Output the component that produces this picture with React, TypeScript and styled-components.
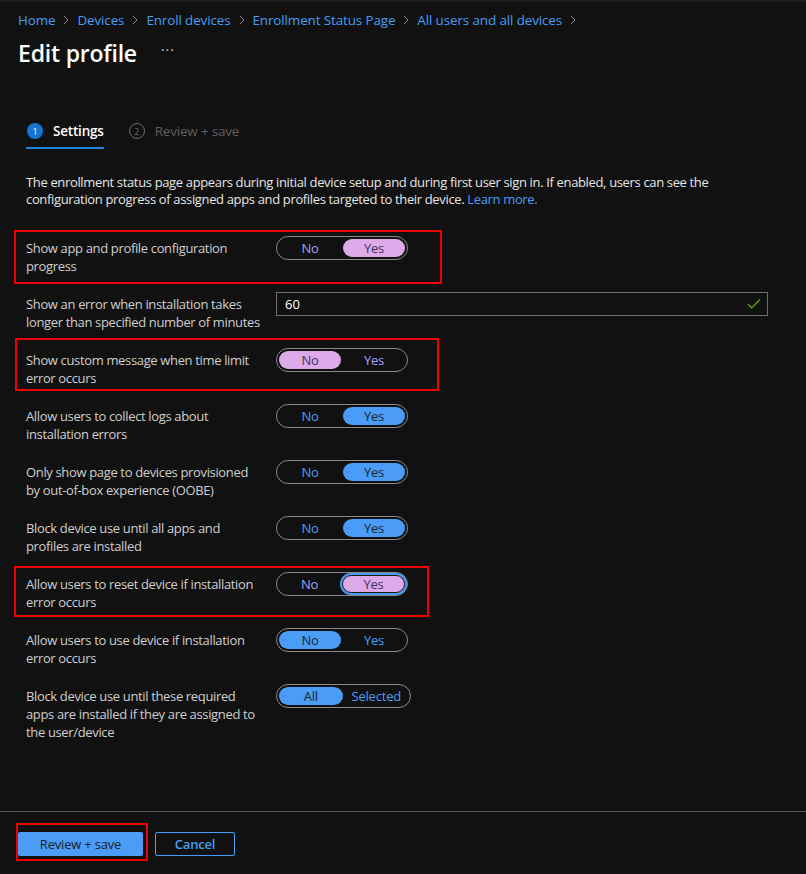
import React from "react";
import styled, { createGlobalStyle, css } from "styled-components";

const GlobalStyle = createGlobalStyle`
  html, body { margin: 0; padding: 0; background: #111111; }
  body { font-family: "Segoe UI", "Open Sans", "Noto Sans", sans-serif; -webkit-font-smoothing: antialiased; }
  * { box-sizing: border-box; }
`;

const Page = styled.div`
  width: 806px;
  height: 874px;
  background: #111111;
  border-top: 2px solid #1c1c1c;
  display: flex;
  flex-direction: column;
  overflow: hidden;
`;

const Header = styled.header`
  padding: 8px 18px 0;
`;

const Crumbs = styled.nav`
  display: flex;
  align-items: center;
  gap: 8px;
  height: 20px;
  font-size: 13.4px;
  line-height: 20px;
  letter-spacing: -0.1px;
`;

const Crumb = styled.a`
  color: #479ef5;
  text-decoration: none;
  white-space: nowrap;
`;

const TitleRow = styled.div`
  display: flex;
  align-items: center;
  margin-top: 7px;
  height: 32px;
`;

const Title = styled.h1`
  margin: 0;
  font-size: 23px;
  font-weight: 600;
  color: #ffffff;
  line-height: 32px;
  letter-spacing: -0.2px;
`;

const More = styled.span`
  margin-left: 24px;
  color: #c8c8c8;
  font-size: 14px;
  letter-spacing: 1px;
  line-height: 14px;
  padding-bottom: 6px;
`;

const Content = styled.main`
  padding: 0 26px;
`;

const Tabs = styled.div`
  display: flex;
  gap: 24px;
  margin-top: 49px;
`;

const Tab = styled.div<{ $active?: boolean }>`
  display: flex;
  align-items: center;
  gap: 10px;
  padding: 3px 0 6px 1px;
  font-size: 13.5px;
  line-height: 20px;
  letter-spacing: -0.2px;
  border-bottom: 2px solid ${(p) => (p.$active ? "#1f86e0" : "transparent")};
  color: ${(p) => (p.$active ? "#ffffff" : "#5f5f5f")};
  font-weight: ${(p) => (p.$active ? 600 : 400)};
`;

const StepNum = styled.span<{ $active?: boolean }>`
  width: 16px;
  height: 16px;
  border-radius: 50%;
  display: inline-flex;
  align-items: center;
  justify-content: center;
  font-size: 9px;
  font-weight: 400;
  line-height: 1;
  ${(p) =>
    p.$active
      ? css`
          background: #1673d1;
          color: #ffffff;
        `
      : css`
          border: 1px solid #6a6a6a;
          color: #6a6a6a;
        `}
`;

const Description = styled.p`
  margin: 25px 0 0;
  font-size: 13px;
  line-height: 17px;
  color: #e6e6e6;
  max-width: 740px;
  letter-spacing: -0.35px;
`;

const Link = styled.a`
  color: #479ef5;
  text-decoration: none;
`;

const Form = styled.div`
  margin-top: 28px;
  display: flex;
  flex-direction: column;
`;

const Row = styled.div`
  position: relative;
  display: grid;
  grid-template-columns: 250px 1fr;
  align-items: start;
  min-height: 56px;
`;

const Highlight = styled.div<{ $top: number; $left: number; $w: number; $h: number }>`
  position: absolute;
  top: ${(p) => p.$top}px;
  left: ${(p) => p.$left}px;
  width: ${(p) => p.$w}px;
  height: ${(p) => p.$h}px;
  border: 2px solid #f00000;
  pointer-events: none;
`;

const Label = styled.div`
  padding-top: 3px;
  padding-right: 14px;
  font-size: 13px;
  line-height: 18px;
  color: #cfcfcf;
  letter-spacing: -0.35px;
`;

const Track = styled.div<{ $w?: number }>`
  display: inline-flex;
  gap: 2px;
  width: ${(p) => p.$w ?? 132}px;
  height: 24px;
  padding: 2px;
  border: 1px solid #8a8a8a;
  border-radius: 12px;
`;

type Tone = "blue" | "pink";

const Segment = styled.div<{ $on: boolean; $tone: Tone; $focus?: boolean }>`
  flex: 1;
  height: 18px;
  border-radius: 9px;
  display: flex;
  align-items: center;
  justify-content: center;
  font-size: 13px;
  line-height: 18px;
  letter-spacing: -0.2px;
  ${(p) =>
    p.$on
      ? p.$tone === "pink"
        ? css`
            background: #dea9e9;
            color: #3b3563;
          `
        : css`
            background: #4a9cf7;
            color: #1c2533;
          `
      : p.$tone === "pink"
      ? css`
          color: #a7a0f8;
        `
      : css`
          color: #479ef5;
        `}
  ${(p) =>
    p.$focus &&
    css`
      border: 1px solid #1a1a1a;
      box-shadow: 0 0 0 2px #4a9cf7;
    `}
`;

const InputBox = styled.div`
  display: flex;
  align-items: center;
  justify-content: space-between;
  width: 492px;
  height: 24px;
  border: 1px solid #6e6e6e;
  padding: 0 6px 0 8px;
  color: #ffffff;
  font-size: 13px;
`;

const Footer = styled.footer`
  margin-top: auto;
  border-top: 1px solid #5c5c5c;
  padding: 20px 18px 18px;
  display: flex;
  gap: 12px;
`;

const ButtonWrap = styled.div`
  position: relative;
`;

const Primary = styled.button`
  width: 125px;
  height: 24px;
  border: none;
  border-radius: 2px;
  background: #4a9cf7;
  color: #1d1d1d;
  font-family: inherit;
  font-size: 13px;
  letter-spacing: -0.2px;
  padding: 0;
`;

const Secondary = styled.button`
  width: 80px;
  height: 24px;
  border: 1px solid #479ef5;
  border-radius: 2px;
  background: transparent;
  color: #479ef5;
  font-family: inherit;
  font-size: 13px;
  font-weight: 600;
  letter-spacing: -0.2px;
  padding: 0;
`;

const Chevron = () => (
  <svg width="6" height="10" viewBox="0 0 6 10" fill="none">
    <path d="M0.8 0.8 L5 5 L0.8 9.2" stroke="#8a8a8a" strokeWidth="1" />
  </svg>
);

const Check = () => (
  <svg width="14" height="12" viewBox="0 0 14 12" fill="none">
    <path d="M1 6.2 L4.8 9.8 L13 1.6" stroke="#5aa300" strokeWidth="1.4" />
  </svg>
);

type ToggleProps = {
  left: string;
  right: string;
  value: 0 | 1;
  tone: Tone;
  focus?: boolean;
  width?: number;
};

const Toggle = ({ left, right, value, tone, focus, width }: ToggleProps) => (
  <Track $w={width}>
    <Segment $on={value === 0} $tone={tone}>{left}</Segment>
    <Segment $on={value === 1} $tone={tone} $focus={focus && value === 1}>
      {right}
    </Segment>
  </Track>
);

type RowDef = {
  label: string;
  control: React.ReactNode;
  box?: { top: number; left: number; w: number; h: number };
};

const rows: RowDef[] = [
  {
    label: "Show app and profile configuration progress",
    control: <Toggle left="No" right="Yes" value={1} tone="pink" />,
    box: { top: -6, left: -12, w: 428, h: 54 },
  },
  {
    label: "Show an error when installation takes longer than specified number of minutes",
    control: (
      <InputBox>
        <span>60</span>
        <Check />
      </InputBox>
    ),
  },
  {
    label: "Show custom message when time limit error occurs",
    control: <Toggle left="No" right="Yes" value={0} tone="pink" />,
    box: { top: -10, left: -11, w: 424, h: 53 },
  },
  {
    label: "Allow users to collect logs about installation errors",
    control: <Toggle left="No" right="Yes" value={1} tone="blue" />,
  },
  {
    label: "Only show page to devices provisioned by out-of-box experience (OOBE)",
    control: <Toggle left="No" right="Yes" value={1} tone="blue" />,
  },
  {
    label: "Block device use until all apps and profiles are installed",
    control: <Toggle left="No" right="Yes" value={1} tone="blue" />,
  },
  {
    label: "Allow users to reset device if installation error occurs",
    control: <Toggle left="No" right="Yes" value={1} tone="pink" focus />,
    box: { top: -6, left: -12, w: 415, h: 51 },
  },
  {
    label: "Allow users to use device if installation error occurs",
    control: <Toggle left="No" right="Yes" value={0} tone="blue" />,
  },
  {
    label: "Block device use until these required apps are installed if they are assigned to the user/device",
    control: <Toggle left="All" right="Selected" value={0} tone="blue" width={135} />,
  },
];

const crumbs = ["Home", "Devices", "Enroll devices", "Enrollment Status Page", "All users and all devices"];

export default function App() {
  return (
    <>
      <GlobalStyle />
      <Page>
        <Header>
          <Crumbs>
            {crumbs.map((c) => (
              <React.Fragment key={c}>
                <Crumb href="#">{c}</Crumb>
                <Chevron />
              </React.Fragment>
            ))}
          </Crumbs>
          <TitleRow>
            <Title>Edit profile</Title>
            <More>···</More>
          </TitleRow>
        </Header>
        <Content>
          <Tabs>
            <Tab $active>
              <StepNum $active>1</StepNum>
              Settings
            </Tab>
            <Tab>
              <StepNum>2</StepNum>
              Review + save
            </Tab>
          </Tabs>
          <Description>
            The enrollment status page appears during initial device setup and during first user sign in. If enabled,
            users can see the configuration progress of assigned apps and profiles targeted to their device.{" "}
            <Link href="#">Learn more.</Link>
          </Description>
          <Form>
            {rows.map((r) => (
              <Row key={r.label}>
                {r.box && <Highlight $top={r.box.top} $left={r.box.left} $w={r.box.w} $h={r.box.h} />}
                <Label>{r.label}</Label>
                <div>{r.control}</div>
              </Row>
            ))}
          </Form>
        </Content>
        <Footer>
          <ButtonWrap>
            <Primary>Review + save</Primary>
            <Highlight $top={-9} $left={-2} $w={132} $h={38} />
          </ButtonWrap>
          <Secondary>Cancel</Secondary>
        </Footer>
      </Page>
    </>
  );
}
